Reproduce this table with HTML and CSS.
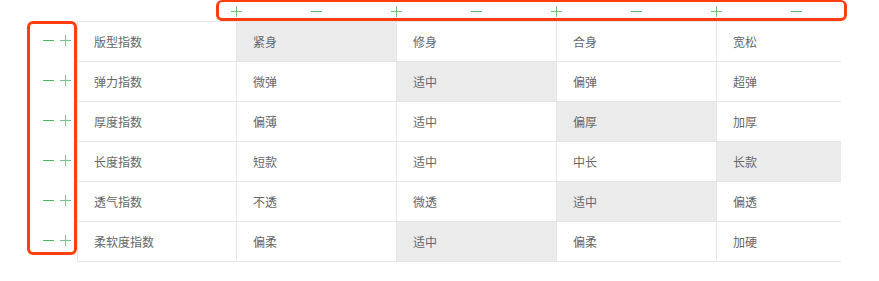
FILE: index.html
```html
<!DOCTYPE html>
<html lang="zh">
<head>
<meta charset="utf-8">
<link rel="stylesheet" href="styles.css">
</head>
<body>
<div class="page">
  <div class="topbar">
    <svg class="ic plus" viewBox="0 0 11 11"><path d="M0 5.5H11M5.5 0V11"/></svg>
    <svg class="ic minus" viewBox="0 0 11 11"><path d="M0 5.5H11"/></svg>
    <svg class="ic plus" viewBox="0 0 11 11"><path d="M0 5.5H11M5.5 0V11"/></svg>
    <svg class="ic minus" viewBox="0 0 11 11"><path d="M0 5.5H11"/></svg>
    <svg class="ic plus" viewBox="0 0 11 11"><path d="M0 5.5H11M5.5 0V11"/></svg>
    <svg class="ic minus" viewBox="0 0 11 11"><path d="M0 5.5H11"/></svg>
    <svg class="ic plus" viewBox="0 0 11 11"><path d="M0 5.5H11M5.5 0V11"/></svg>
    <svg class="ic minus" viewBox="0 0 11 11"><path d="M0 5.5H11"/></svg>
  </div>
  <div class="main">
    <div class="side">
      <div class="ctl"><svg class="ic minus" viewBox="0 0 11 11"><path d="M0 5.5H11"/></svg><svg class="ic plus" viewBox="0 0 11 11"><path d="M0 5.5H11M5.5 0V11"/></svg></div>
      <div class="ctl"><svg class="ic minus" viewBox="0 0 11 11"><path d="M0 5.5H11"/></svg><svg class="ic plus" viewBox="0 0 11 11"><path d="M0 5.5H11M5.5 0V11"/></svg></div>
      <div class="ctl"><svg class="ic minus" viewBox="0 0 11 11"><path d="M0 5.5H11"/></svg><svg class="ic plus" viewBox="0 0 11 11"><path d="M0 5.5H11M5.5 0V11"/></svg></div>
      <div class="ctl"><svg class="ic minus" viewBox="0 0 11 11"><path d="M0 5.5H11"/></svg><svg class="ic plus" viewBox="0 0 11 11"><path d="M0 5.5H11M5.5 0V11"/></svg></div>
      <div class="ctl"><svg class="ic minus" viewBox="0 0 11 11"><path d="M0 5.5H11"/></svg><svg class="ic plus" viewBox="0 0 11 11"><path d="M0 5.5H11M5.5 0V11"/></svg></div>
      <div class="ctl"><svg class="ic minus" viewBox="0 0 11 11"><path d="M0 5.5H11"/></svg><svg class="ic plus" viewBox="0 0 11 11"><path d="M0 5.5H11M5.5 0V11"/></svg></div>
    </div>
    <div class="grid">
      <div class="cell first">版型指数</div><div class="cell on">紧身</div><div class="cell">修身</div><div class="cell">合身</div><div class="cell last">宽松</div>
      <div class="cell first">弹力指数</div><div class="cell">微弹</div><div class="cell on">适中</div><div class="cell">偏弹</div><div class="cell last">超弹</div>
      <div class="cell first">厚度指数</div><div class="cell">偏薄</div><div class="cell">适中</div><div class="cell on">偏厚</div><div class="cell last">加厚</div>
      <div class="cell first">长度指数</div><div class="cell">短款</div><div class="cell">适中</div><div class="cell">中长</div><div class="cell last on">长款</div>
      <div class="cell first">透气指数</div><div class="cell">不透</div><div class="cell">微透</div><div class="cell on">适中</div><div class="cell last">偏透</div>
      <div class="cell first">柔软度指数</div><div class="cell">偏柔</div><div class="cell on">适中</div><div class="cell">偏柔</div><div class="cell last">加硬</div>
    </div>
  </div>
</div>
</body>
</html>
```
FILE: styles.css
```css
* { box-sizing: border-box; }
html, body { margin: 0; padding: 0; background: #fff; }
body {
  font-family: "Noto Sans CJK SC", "Noto Sans", sans-serif;
  font-size: 12px;
  color: #666;
}
.page { width: 879px; height: 281px; }

.ic {
  display: block;
  width: 11px;
  height: 11px;
  flex: none;
  fill: none;
  stroke-width: 1;
  shape-rendering: crispEdges;
}
.minus { stroke: #4fb562; }
.plus { stroke: #72c582; }

.topbar {
  margin-left: 216px;
  width: 631px;
  height: 21px;
  border: 3px solid #ff3d0d;
  border-top-width: 2px;
  border-radius: 6px;
  display: flex;
  align-items: flex-start;
  gap: 69px;
  padding: 4px 0 0 12px;
}

.main { display: flex; }
.side {
  margin-left: 27px;
  width: 50px;
  height: 234px;
  border: 3px solid #ff3d0d;
  border-radius: 6px;
  display: flex;
  flex-direction: column;
  flex: none;
}
.ctl {
  height: 40px;
  flex: none;
  display: flex;
  align-items: flex-start;
  gap: 6px;
  padding: 14px 0 0 13px;
}
.ctl:first-child { margin-top: -3px; }

.grid {
  display: grid;
  grid-template-columns: 159px 160px 160px 160px 125px;
  grid-auto-rows: 40px;
  border-bottom: 1px solid #e6e6e6;
  width: 764px;
  height: 241px;
  flex: none;
}
.cell {
  border-top: 1px solid #e6e6e6;
  border-left: 1px solid #e6e6e6;
  display: flex;
  align-items: center;
  padding-left: 16px;
  background: #fff;
}
.cell.on { background: #ebebeb; }
```
